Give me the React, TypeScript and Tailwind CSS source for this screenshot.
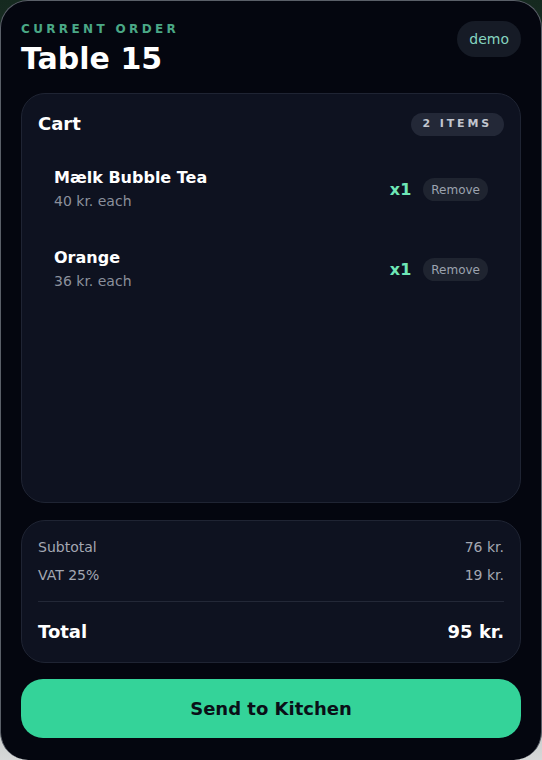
import React from 'react';

interface CartItem {
  name: string;
  price: number;
  qty: number;
}

const items: CartItem[] = [
  { name: 'Mælk Bubble Tea', price: 40, qty: 1 },
  { name: 'Orange', price: 36, qty: 1 },
];

function ItemRow({ item }: { item: CartItem }) {
  return (
    <div className="flex items-center justify-between px-4 py-[18px]">
      <div className="flex flex-col">
        <span className="text-[16px] leading-[20px] font-bold text-white">{item.name}</span>
        <span className="mt-[3px] text-[14px] leading-[20px] text-[#8b909c]">{item.price} kr. each</span>
      </div>
      <div className="flex items-center gap-3">
        <span className="text-[16px] font-bold text-[#6ee7b7]">x{item.qty}</span>
        <button className="h-[23px] rounded-full bg-[#1f2430] px-2 text-[12px] text-[#9ca3af]">Remove</button>
      </div>
    </div>
  );
}

export default function App() {
  const subtotal = items.reduce((s, i) => s + i.price * i.qty, 0);
  const vat = Math.round(subtotal * 0.25);
  const total = subtotal + vat;

  return (
    <div
      className="h-[760px] w-[542px] bg-gradient-to-b from-[#15291f] via-[#3a4a42] to-[#d6d8d8]"
      style={{ fontFamily: '"DejaVu Sans", sans-serif' }}
    >
      <div className="flex h-full flex-col rounded-[28px] border border-b-0 border-[#5a5f68] bg-[#04060f] px-[20px] pt-[20px] pb-[22px]">
        <div className="flex items-start justify-between">
          <div className="flex flex-col pt-[1px]">
            <span className="text-[12px] leading-[14px] font-bold tracking-[0.28em] text-[#4aa886]">CURRENT ORDER</span>
            <span className="mt-[6px] text-[30px] leading-[34px] font-bold text-white">Table 15</span>
          </div>
          <span className="flex h-[36px] items-center rounded-full bg-[#161b26] px-3 text-[14px] text-[#86d5c0]">demo</span>
        </div>

        <div className="mt-[17px] flex flex-1 flex-col rounded-[24px] border border-[#1f2433] bg-[#0e1220] px-[16px] pt-[18px]">
          <div className="flex items-center justify-between">
            <span className="text-[18px] leading-[24px] font-bold text-white">Cart</span>
            <span className="flex h-[23px] items-center rounded-full bg-[#232837] px-3 text-[11px] font-bold tracking-[0.26em] text-[#c2c6cf]">
              {items.length} ITEMS
            </span>
          </div>
          <div className="mt-[14px] flex flex-col gap-[1px]">
            {items.map((item) => (
              <ItemRow key={item.name} item={item} />
            ))}
          </div>
        </div>

        <div className="mt-[17px] flex flex-col rounded-[24px] border border-[#1f2433] bg-[#0e1220] px-[16px] pt-[16px] pb-[18px]">
          <div className="flex justify-between text-[14px] leading-[20px] text-[#a3a7b2]">
            <span>Subtotal</span>
            <span>{subtotal} kr.</span>
          </div>
          <div className="mt-[8px] flex justify-between text-[14px] leading-[20px] text-[#a3a7b2]">
            <span>VAT 25%</span>
            <span>{vat} kr.</span>
          </div>
          <div className="mt-[16px] h-px bg-[#232837]" />
          <div className="mt-[18px] flex justify-between text-[18px] leading-[24px] font-bold text-white">
            <span>Total</span>
            <span>{total} kr.</span>
          </div>
        </div>

        <button className="mt-[16px] h-[59px] rounded-[22px] bg-[#34d399] text-[18px] font-bold text-[#0a0f17]">
          Send to Kitchen
        </button>
      </div>
    </div>
  );
}
